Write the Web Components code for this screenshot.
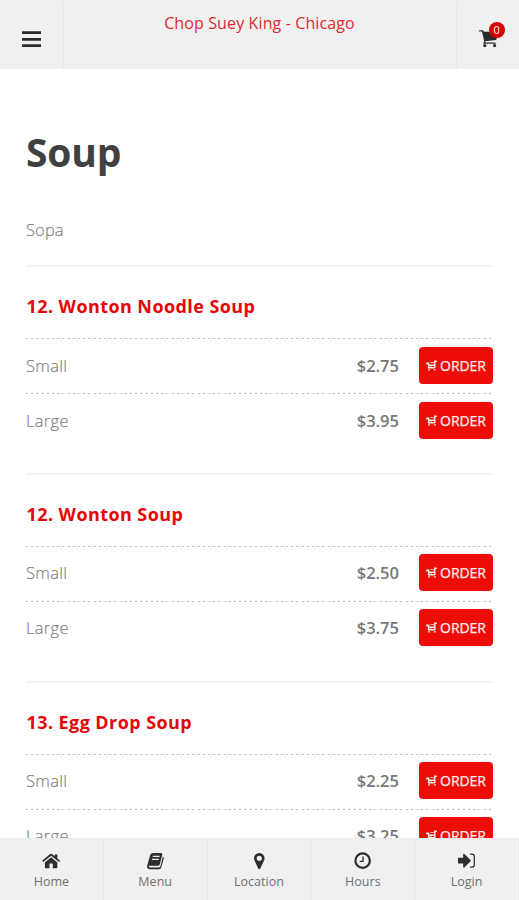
<!DOCTYPE html>
<html lang="en">
<head>
<meta charset="utf-8">
<title>Chop Suey King - Chicago</title>
<style>
html, body { margin: 0; height: 100%; overflow: hidden; background: #fff; }
body { font-family: "Open Sans", "Noto Sans", sans-serif; }
</style>
</head>
<body>
<menu-app></menu-app>
<script>
const define = (name, html, fill) => {
  const template = document.createElement('template');
  template.innerHTML = html;
  customElements.define(name, class extends HTMLElement {
    connectedCallback() {
      if (this.shadowRoot) return;
      const root = this.attachShadow({ mode: 'open' });
      root.append(template.content.cloneNode(true));
      if (fill) fill(this, root);
    }
  });
};

const icons = {
  bars: '<path d="M0 1.6h19M0 8.3h19M0 14.6h19" fill="none" stroke="currentColor" stroke-width="2.8"/>',
  cart: '<path fill="currentColor" d="M0 .8Q0 .2.7.2H4.1Q5 .2 5.3 1.8H19Q20 1.8 20 2.8L18.8 9.6Q18.6 10.4 17.8 10.6L6.9 12 6.6 13.2H17.2Q18 13.2 18 14T17.2 14.7H5.2Q4.3 14.7 4.7 13.7L5.5 12 3.2 1.7H.8Q0 1.7 0 .8Z"/><circle cx="6.2" cy="16.6" r="1.7" fill="currentColor"/><circle cx="16.6" cy="16.6" r="1.7" fill="currentColor"/>',
  basket: '<path d="M.2 4.3H2.6V8.7H8.8M.8 4.3V5.6M2.6 6.3H8.8V2.3H10.8M8.8 6V9M2.2 10.9H4M7.8 10.9H9.8" fill="none" stroke="currentColor" stroke-width="1.4"/><path d="M4.5 3.6H8.5M5 6V8.6" fill="none" stroke="currentColor" stroke-width=".8"/>',
  home: '<path fill="currentColor" d="M9.5 4.4 16 9.8V15.2Q16 16 15.2 16H11.2V11H7.8V16H3.8Q3 16 3 15.2V9.8Z"/><path fill="currentColor" d="M8.2 1.4Q9.5.3 10.8 1.4L13.2 3.4V1.6H16V5.8L18.8 8.1 17.8 9.3 9.5 2.9 1.2 9.3.2 8.1Z"/>',
  book: '<path fill="currentColor" fill-rule="evenodd" d="M6.2 0H14.8Q16.3.3 15.9 1.8L13.3 12.1Q12.9 13.3 11.6 13.3H2.8Q1.6 13.4 1.8 14.2 2 15 3.2 15H12.4Q13.5 15 14 13.7L16.6 3.7Q17.8 4.5 17.4 5.8L14.9 15.2Q14.3 17 12.6 17H2.9Q.8 17 0 14.8-.1 13.5.4 12.4L3.4 1.8Q4.1 0 6.2 0ZM6.1 2.9 5.8 4.2H13L13.3 2.9ZM5.3 5.9 5 7.2H12.2L12.5 5.9Z"/>',
  pin: '<path fill="currentColor" fill-rule="evenodd" d="M5.5 0A5.5 5.5 0 0 1 11 5.5Q11 6.8 10.5 7.8L6.7 16Q6.3 17 5.5 17T4.3 16L.5 7.8Q0 6.8 0 5.5A5.5 5.5 0 0 1 5.5 0ZM5.5 2.8A2.7 2.7 0 1 0 5.5 8.2 2.7 2.7 0 1 0 5.5 2.8Z"/>',
  clock: '<circle cx="9" cy="9" r="7.5" fill="none" stroke="currentColor" stroke-width="2.3"/><path d="M9.4 4.6V9.8H6" fill="none" stroke="currentColor" stroke-width="1.4"/>',
  login: '<path fill="currentColor" d="M0 5H5.4V1.3Q5.7.3 6.7 1L13 7.3Q13.6 8 13 8.7L6.7 15Q5.7 15.7 5.4 14.7V11H0Z"/><path d="M12.5 1.2H14.5Q17 1.2 17 3.7V12.3Q17 14.8 14.5 14.8H12.5" fill="none" stroke="currentColor" stroke-width="1.3"/>'
};
const boxes = { bars: [19, 17], cart: [20, 19], basket: [11, 13], home: [19, 16], book: [18, 17], pin: [11, 17], clock: [18, 18], login: [18, 16] };

define('ui-icon', '<style>:host{display:block;line-height:0}svg{display:block;overflow:visible}</style>', (el, root) => {
  const [w, h] = boxes[el.getAttribute('name')];
  const scale = Number(el.getAttribute('scale') || 1);
  root.innerHTML += `<svg width="${w * scale}" height="${h * scale}" viewBox="0 0 ${w} ${h}">${icons[el.getAttribute('name')]}</svg>`;
});

define('top-bar', `
<style>
:host{display:grid;grid-template-columns:63px 1fr 62px;height:69px;background:#f0f0f0;box-sizing:border-box;flex:none}
.side{display:flex;align-items:center;justify-content:center;padding-top:9px;box-sizing:border-box;color:#2b2b2b}
.side:first-child{padding-right:1px}
.title{text-align:center;color:#e32a2e;font-size:16px;line-height:22px;padding:8px 1px 0 0;margin-top:4px;box-sizing:border-box;border:solid #e7e7e7;border-width:0 1px;letter-spacing:.12px}
.cart{position:relative;display:block}
.badge{position:absolute;left:10px;top:-8px;width:16px;height:16px;border-radius:50%;background:#d40000;color:#fff;font-size:11px;line-height:16px;text-align:center}
</style>
<div class="side"><ui-icon name="bars"></ui-icon></div>
<div class="title"><slot></slot></div>
<div class="side"><span class="cart"><ui-icon name="cart" scale=".94"></ui-icon><span class="badge">0</span></span></div>`);

define('order-button', `
<style>
:host{display:flex;align-items:center;justify-content:center;gap:3px;width:74px;height:37px;border-radius:4px;background:#ee0c08;color:#ffecec;font-size:14px;box-sizing:border-box}
span{letter-spacing:-.05px;-webkit-text-stroke:.25px currentColor}
</style>
<ui-icon name="basket"></ui-icon><span><slot></slot></span>`);

define('price-row', `
<style>
:host{display:flex;align-items:center;height:55px;box-sizing:border-box;padding-bottom:1px;color:#7c7c7c;font-size:16.5px;
background:repeating-linear-gradient(90deg,#bdbdbd 0 2px,#fafafa 2px 5.2px) 0 0/466px 1px no-repeat}
.name{flex:1;font-weight:300;letter-spacing:.3px;-webkit-text-stroke:.15px currentColor}
.price{font-weight:600;color:#777;margin-right:20px}
</style>
<span class="name"><slot></slot></span><span class="price"></span><order-button>ORDER</order-button>`, (el, root) => {
  root.querySelector('.price').textContent = el.getAttribute('price');
});

define('menu-item', `
<style>
:host{display:block;height:207.8px;box-sizing:border-box;border-top:2px solid #f3f3f3}
h2{margin:0;height:71px;box-sizing:border-box;padding:27px 0 0 .5px;font-size:18px;line-height:25px;font-weight:700;letter-spacing:.42px;color:#e20808}
</style>
<h2></h2><slot></slot>`, (el, root) => {
  root.querySelector('h2').textContent = el.getAttribute('heading');
});

define('tab-item', `
<style>
:host{display:flex;flex-direction:column;align-items:center;color:#2e2e2e;box-sizing:border-box;border-right:1px solid #e6e6e6;padding-top:13px}
.icon{height:18px;display:flex;align-items:center}
.label{font-size:12.5px;line-height:18px;color:#707070;margin-top:3px;letter-spacing:.05px}
</style>
<div class="icon"></div><div class="label"><slot></slot></div>`, (el, root) => {
  root.querySelector('.icon').innerHTML = `<ui-icon name="${el.getAttribute('icon')}" scale=".96"></ui-icon>`;
});

define('tab-bar', `
<style>
:host{display:grid;grid-template-columns:repeat(5,1fr);height:62px;background:#f0f0f0;border-top:1px solid #eaeaea;box-sizing:border-box;flex:none}
</style><slot></slot>`);

define('menu-app', `
<style>
:host{display:flex;flex-direction:column;height:900px;width:519px;overflow:hidden}
main{flex:1;min-height:0;overflow:hidden;padding:0 26px;background:#fff}
h1{margin:0;padding-top:55px;font-size:39px;line-height:56px;font-weight:700;color:#404040;letter-spacing:-.2px}
.sub{height:85px;box-sizing:border-box;padding-top:38px;font-size:16.5px;line-height:24px;font-weight:300;color:#7c7c7c;letter-spacing:.1px;-webkit-text-stroke:.15px currentColor}
</style>
<top-bar>Chop Suey King - Chicago</top-bar>
<main>
<h1>Soup</h1><div class="sub">Sopa</div>
<menu-item heading="12. Wonton Noodle Soup"><price-row price="$2.75">Small</price-row><price-row price="$3.95">Large</price-row></menu-item>
<menu-item heading="12. Wonton Soup"><price-row price="$2.50">Small</price-row><price-row price="$3.75">Large</price-row></menu-item>
<menu-item heading="13. Egg Drop Soup"><price-row price="$2.25">Small</price-row><price-row price="$3.25">Large</price-row></menu-item>
</main>
<tab-bar><tab-item icon="home">Home</tab-item><tab-item icon="book">Menu</tab-item><tab-item icon="pin">Location</tab-item><tab-item icon="clock">Hours</tab-item><tab-item icon="login">Login</tab-item></tab-bar>`);
</script>
</body>
</html>
